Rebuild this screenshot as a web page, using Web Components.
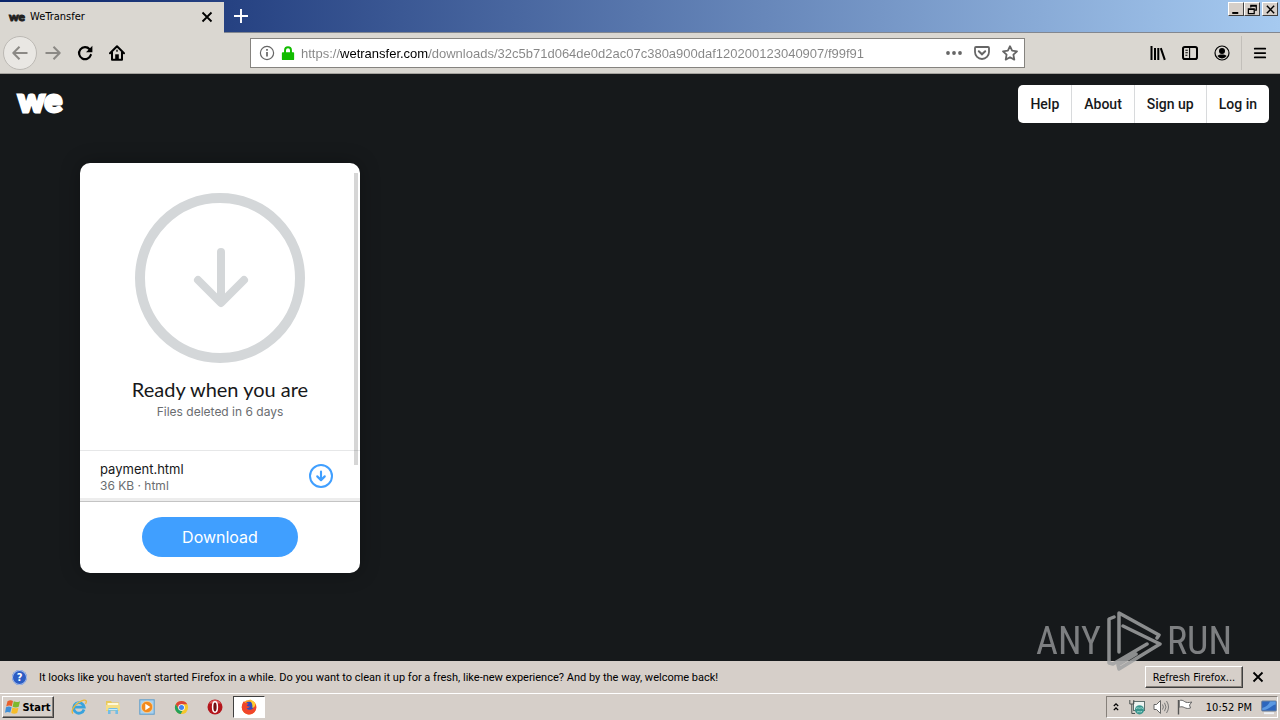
<!DOCTYPE html>
<html lang="en">
<head>
<meta charset="utf-8">
<title>WeTransfer</title>
<style>
    html, body {
        margin: 0;
        height: 100%;
    }

    body {
        display: flex;
        flex-direction: column;
        position: relative;
        overflow: hidden;
        background: #16191b;
        font-family: 'DejaVu Sans Condensed', 'DejaVu Sans', sans-serif;
        font-size: 11px;
        color: #000;
        --face: #d6cfc9;
    }

    transfer-page {
        flex: 1;
        min-height: 0;
    }
</style>
</head>
<body>
<title-bar>
    <browser-tab>WeTransfer</browser-tab>
</title-bar>
<nav-toolbar></nav-toolbar>
<transfer-page>
    <site-header slot="header">
        <a href="#help">Help</a>
        <a href="#about">About</a>
        <a href="#signup">Sign up</a>
        <a href="#login">Log in</a>
    </site-header>
    <download-card>
        <span slot="title">Ready when you are</span>
        <span slot="expiry">Files deleted in 6 days</span>
        <file-row slot="files">
            payment.html
            <span slot="meta">36 KB · html</span>
        </file-row>
    </download-card>
</transfer-page>
<notice-bar>It looks like you haven't started Firefox in a while. Do you want to clean it up for a fresh, like-new experience? And by the way, welcome back!</notice-bar>
<task-bar></task-bar>
<any-watermark></any-watermark>

<script>
const base = `
    :host, * { box-sizing: border-box; }
    button {
        margin: 0;
        padding: 0;
        border: 0;
        background: none;
        font: inherit;
        color: inherit;
        display: flex;
        align-items: center;
        justify-content: center;
    }
    svg { display: block; }
`;

function define(name, css, html) {
    const template = document.createElement('template');
    template.innerHTML = `<style>${base}${css}</style>${html}`;
    customElements.define(name, class extends HTMLElement {
        constructor() {
            super();
            this.attachShadow({ mode: 'open' });
            this.shadowRoot.appendChild(template.content.cloneNode(true));
        }
    });
}

// every icon is drawn on a 16 x 16 grid
const icons = {
    close: '<path d="M3.5 3.5l9 9M12.5 3.5l-9 9" stroke="currentColor" stroke-width="1.8" fill="none"/>',
    plus: '<path d="M8 0v16M0 8h16" stroke="currentColor" stroke-width="2.2" fill="none"/>',
    back: '<path d="M15.5 8H1.5M7.5 1.8L1.3 8l6.2 6.2" stroke="currentColor" stroke-width="2" fill="none" stroke-linejoin="round"/>',
    forward: '<path d="M.5 8h14M8.5 1.8L14.7 8l-6.2 6.2" stroke="currentColor" stroke-width="2" fill="none" stroke-linejoin="round"/>',
    reload: '<path d="M12.6 4.2A6 6 0 1 0 13.8 10" stroke="currentColor" stroke-width="2.2" fill="none" stroke-linecap="round"/><path d="M15.4.8v6.4H9z" fill="currentColor"/>',
    home: '<path d="M1 8.2L8 1.3l7 6.9M3 7v7.8h10V7" stroke="currentColor" stroke-width="2" fill="none" stroke-linejoin="round" stroke-linecap="round"/><path d="M6.2 14.5V9.3h3.6v5.2z" fill="currentColor"/><path d="M8 4.8v2" stroke="currentColor" stroke-width="1.4"/>',
    info: '<circle cx="8" cy="8" r="6.6" stroke="currentColor" stroke-width="1.2" fill="none"/><path d="M8 7v4.6M8 4v1.8" stroke="currentColor" stroke-width="1.7"/>',
    lock: '<path d="M4.6 8V4.8a3.4 3.4 0 0 1 6.8 0V8" stroke="currentColor" stroke-width="2.2" fill="none"/><rect x="1" y="7" width="14" height="9" rx="1" fill="currentColor"/>',
    dots: '<circle cx="2" cy="8" r="1.9" fill="currentColor"/><circle cx="8" cy="8" r="1.9" fill="currentColor"/><circle cx="14" cy="8" r="1.9" fill="currentColor"/>',
    pocket: '<path d="M2 2h12a1 1 0 0 1 1 1v4a7 7 0 0 1-14 0V3a1 1 0 0 1 1-1z" stroke="currentColor" stroke-width="1.8" fill="none"/><path d="M4.8 6.2L8 9.3l3.2-3.1" stroke="currentColor" stroke-width="2" fill="none" stroke-linecap="round"/>',
    star: '<path d="M8 1.2l2.1 4.5 4.9.6-3.6 3.4.9 4.9L8 12.2l-4.3 2.4.9-4.9L1 6.3l4.9-.6z" stroke="currentColor" stroke-width="1.8" fill="none" stroke-linejoin="round"/>',
    library: '<path d="M1.5 1v14M5 3v12M8.3 3v12M10.8 3.2l4 11.6" stroke="currentColor" stroke-width="2" fill="none"/>',
    sidebar: '<rect x="1" y="2" width="14" height="12" rx="1.8" stroke="currentColor" stroke-width="2" fill="none"/><path d="M7.6 2v12M3.4 5.2h2.4M3.4 7.7h2.4M3.4 10.2h2" stroke="currentColor" stroke-width="1.1"/>',
    account: '<circle cx="8" cy="8" r="7" stroke="currentColor" stroke-width="1.2" fill="none"/><circle cx="8" cy="6" r="3" fill="currentColor"/><path d="M3.4 11C4.7 9.6 6 9.4 8 9.4s3.3.2 4.6 1.6A5.600 5.600 0 0 1 8 13.500 5.600 5.600 0 0 1 3.400 11z" fill="currentColor"/>',
    menu: '<path d="M2 3h12M2 8h12M2 13h12" stroke="currentColor" stroke-width="2" fill="none" stroke-linecap="round"/>',
    minimize: '<path d="M3 12h8v2.6H3z" fill="currentColor"/>',
    restore: '<path d="M5.5 5V2h8v7H11M5 3h9" stroke="currentColor" stroke-width="1.8" fill="none"/><path d="M2 7h8.5v7H2zM2 7.8h8.5" stroke="currentColor" stroke-width="1.8" fill="none"/>',
    arrow: '<path d="M8 4.500v6.500M5 8.300L8 11.300l3-3" stroke="currentColor" stroke-width="1.700" fill="none" stroke-linecap="round" stroke-linejoin="round"/>',
    chevrons: '<path d="M4.500 6.500L8 3l3.500 3.500M4.500 13L8 9.500l3.500 3.500" stroke="currentColor" stroke-width="2" fill="none"/>',
    windows: '<path d="M2.500 2.200C4.600.8 6.400 1 8 1.900L6.800 7.300c-1.700-.9-3.400-1-5.600.2z" fill="#e8602c"/><path d="M8.800 2.300c1.900 1 3.900 1 6.200-.1l-1.300 5.600c-2.200 1.100-4.200.9-6.100-.1z" fill="#7db92e"/><path d="M1 8.300c2-1.200 3.900-1 5.600-.1l-1.300 5.400c-1.700-.9-3.400-1-5.300.1z" fill="#3f8fd8"/><path d="M7.400 8.600c2 1 4 1 6.100.1l-1.300 5.400c-2.100 1-4.100.9-6-.1z" fill="#f6bd2a"/>',
    explorer: '<path d="M13 10.500A5.300 5.300 0 1 1 13.200 8.200H3.500" stroke="#39a3dd" stroke-width="2.800" fill="none"/><path d="M4.300 5.300a4.800 4.800 0 0 1 5-2" stroke="#9adcf6" stroke-width="1" fill="none"/><path d="M2 14.500C-.5 12 3 6.500 8 3.300 11.500 1 15 .3 15.300 2.300c.1.800-.2 1.700-.8 2.600" stroke="#e9b63a" stroke-width="1.300" fill="none"/>',
    folder: '<path d="M1 2h5l1 1.500h7V12H1z" fill="#e9c95a"/><path d="M2.500 4h11v3h-11z" fill="#fff8d8"/><path d="M1 6h14v5.500H1z" fill="#f5de85"/><path d="M3 15v-4.500a1.500 1.500 0 0 1 1.500-1.500h7a1.500 1.500 0 0 1 1.500 1.500V15h-2.600v-3.200H5.600V15z" fill="#73bde5"/><path d="M3.500 10.500h9" stroke="#c7ecfb"/>',
    player: '<rect x=".8" y=".8" width="14.400" height="14.400" fill="#a9d1ee" stroke="#5f9dcb"/><circle cx="8" cy="8" r="5.700" fill="#f28a1d" stroke="#fbd39c" stroke-width=".8"/><path d="M6.300 4.700v6.600L11.300 8z" fill="#fff"/>',
    chrome: '<circle cx="8" cy="8" r="7" fill="#f5c72c"/><path d="M8 1a7 7 0 0 1 6.100 3.500H8L4.900 9.800 1.900 4.500A7 7 0 0 1 8 1z" fill="#dc4437"/><path d="M1.900 4.500l3 5.300L8 11.500l1.200-.2L7.200 15A7 7 0 0 1 1.900 4.500z" fill="#22a05b"/><circle cx="8" cy="8" r="3.500" fill="#fff"/><circle cx="8" cy="8" r="2.700" fill="#4284f0"/>',
    opera: '<circle cx="8" cy="8" r="7.500" fill="#b4151b"/><path d="M2 4.500a7 7 0 0 1 12 0z" fill="#df5658"/><ellipse cx="8" cy="8" rx="2.400" ry="5.200" fill="#741014" stroke="#fff" stroke-width="1.500"/>',
    firefox: '<circle cx="8" cy="8.300" r="7.200" fill="#ff9a1d"/><circle cx="8.300" cy="7.500" r="4.800" fill="#314bbd"/><path d="M1 6.500C1.500 4 2.500 2.600 3.300 2c0 1 .4 1.800 1 2.200 1-.2 2.500-.2 3.400.8-1.200.3-1.600 1-1.800 1.800 1 .6 2 .7 3 .5-.5 1.500-2 2-3.200 1.900 1.500 2.300 5.300 2.300 7-.700.9-2.300.4-4.800-1.400-6.600 3 1.600 4.700 4.700 3.800 8A7.200 7.200 0 0 1 1 6.500z" fill="#f0452b"/><path d="M8.500.3c2.500.6 5 2.200 6 4.600-.2 2.800-2.300 4.300-3.300 3.600C12.300 6 10 2.800 8.500.3z" fill="#ffcc2f"/>',
    network: '<rect x="4.500" y="2.500" width="11" height="9" fill="#edf4f2" stroke="#60716f"/><path d="M.8 1v4h2v9.500H6M4.800 1v4h-2" stroke="#4e5553" fill="none"/><circle cx="10.500" cy="10.800" r="4.600" fill="#39968e"/><path d="M7 9.500c2-1.500 3 .3 4.500-.5 1-.7 2 .5 3 1M8 13c1.500-1 3 .5 5-.5" stroke="#a5dad2" fill="none"/>',
    speaker: '<path d="M1 5.500h2.500L7.500 1.500v13l-4-4H1z" fill="#fff" stroke="#666"/><path d="M9.500 5.500q1.800 2.500 0 5M11.500 3.800q3 4.200 0 8.400M13.500 2q4 6 0 12" stroke="#777" fill="none"/>',
    flag: '<path d="M1.500 1v14.500" stroke="#555" stroke-width="1.400"/><path d="M2.300 1.600c2-1 4 0 5 .8 2 1.400 4 1.400 7.500.6l-2.300 3 1 3c-2.500.8-4 .5-6.200-.5-1.500-.8-3-1-5-.3z" fill="#fff" stroke="#666"/>',
    desktop: '<rect x=".7" y="2" width="14.600" height="10" rx=".8" fill="#2d66bd" stroke="#6f8199"/><path d="M1.300 9C5 8.500 8 5 9 2.600h5.700v3C11 6 7 11.500 1.300 11z" fill="#5b99e2"/><path d="M3 14.200h10" stroke="#eef2f7" stroke-width="1.800"/>'
};

class UiIcon extends HTMLElement {
    constructor() {
        super();
        this.attachShadow({ mode: 'open' });
    }

    connectedCallback() {
        const size = this.getAttribute('size') || 16;
        this.shadowRoot.innerHTML = `
            <style>
                :host { display: block; flex: none; }
                svg { display: block; }
            </style>
            <svg width="${size}" height="${size}" viewBox="0 0 16 16" aria-hidden="true">${icons[this.getAttribute('name')]}</svg>`;
    }
}
customElements.define('ui-icon', UiIcon);

define('we-logo', `
    :host {
        display: block;
        font-family: Lato, sans-serif;
        font-weight: 900;
        font-size: 33px;
        line-height: 24px;
        color: #fff;
        -webkit-text-stroke: 3px currentColor;
    }
    :host([small]) {
        font-size: 12px;
        line-height: 14px;
        color: #222;
        -webkit-text-stroke: 1px currentColor;
    }
`, `we`);

define('title-bar', `
    :host {
        display: flex;
        justify-content: space-between;
        align-items: flex-start;
        flex: none;
        height: 33px;
        background: linear-gradient(90deg, #0a246a, #a6caf0);
        border-bottom: 1px solid #828790;
    }
    .tabs {
        display: flex;
        align-self: stretch;
        padding-top: 2px;
        margin-bottom: -1px;
    }
    .new {
        width: 33px;
        padding-bottom: 3px;
        color: #fff;
    }
    .controls {
        display: flex;
        padding: 2px 2px 0 0;
    }
    .controls button {
        width: 16px;
        height: 14px;
        background: var(--face);
        border: 1px solid;
        border-color: #fff #404040 #404040 #fff;
    }
    .controls button:last-child { margin-left: 2px; }
`, `
    <div class="tabs">
        <slot></slot>
        <button class="new" aria-label="New tab"><ui-icon name="plus" size="14"></ui-icon></button>
    </div>
    <div class="controls">
        <button aria-label="Minimize"><ui-icon name="minimize" size="12"></ui-icon></button>
        <button aria-label="Restore"><ui-icon name="restore" size="11"></ui-icon></button>
        <button aria-label="Close"><ui-icon name="close" size="13"></ui-icon></button>
    </div>
`);

define('browser-tab', `
    :host {
        display: flex;
        align-items: center;
        gap: 5px;
        width: 224px;
        padding: 0 9px 2px;
        background: #dad7d1;
    }
    .label { flex: 1; }
`, `
    <we-logo small></we-logo>
    <span class="label"><slot></slot></span>
    <button aria-label="Close tab"><ui-icon name="close" size="16"></ui-icon></button>
`);

define('nav-toolbar', `
    :host {
        display: flex;
        align-items: center;
        justify-content: space-between;
        flex: none;
        height: 41px;
        padding: 0 3px;
        background: #dad7d1;
        border-bottom: 1px solid #a5a39e;
    }
    .group {
        display: flex;
        align-items: center;
        flex: 0 1 247px;
    }
    .group button { width: 32px; height: 34px; }
    .group button:disabled { color: #8b8985; }
    .group .back {
        width: 34px;
        border: 1px solid #bcb9b4;
        border-radius: 50%;
        background: #e9e7e3;
    }
    .url {
        display: flex;
        align-items: center;
        flex: 1 1 775px;
        height: 30px;
        padding: 0 6px 0 8px;
        gap: 6px;
        background: #fff;
        border: 1px solid #85837f;
        color: #666;
    }
    .lock { color: #12bc00; }
    .actions { display: flex; gap: 12px; }
    /* domain part is darker than the rest of the address */
    input {
        flex: 1;
        min-width: 0;
        padding: 0;
        border: 0;
        outline: 0;
        font: 13px 'Liberation Sans', sans-serif;
        color: #777;
        background: linear-gradient(90deg, #858585 39px, #000 39px, #000 128px, #858585 128px);
        -webkit-background-clip: text;
        background-clip: text;
        -webkit-text-fill-color: transparent;
    }
    .tools {
        flex-basis: 252px;
        justify-content: flex-end;
    }
    .tools .menu {
        width: 36px;
        border-left: 1px solid #c2bfba;
        margin-left: 3px;
    }
`, `
    <div class="group">
        <button class="back" disabled aria-label="Back"><ui-icon name="back"></ui-icon></button>
        <button disabled aria-label="Forward"><ui-icon name="forward"></ui-icon></button>
        <button aria-label="Reload"><ui-icon name="reload"></ui-icon></button>
        <button aria-label="Home"><ui-icon name="home"></ui-icon></button>
    </div>
    <div class="url">
        <ui-icon name="info"></ui-icon>
        <ui-icon class="lock" name="lock" size="14"></ui-icon>
        <input aria-label="Address" value="https://wetransfer.com/downloads/32c5b71d064de0d2ac07c380a900daf120200123040907/f99f91">
        <div class="actions">
            <button aria-label="Page actions"><ui-icon name="dots"></ui-icon></button>
            <button aria-label="Save to Pocket"><ui-icon name="pocket"></ui-icon></button>
            <button aria-label="Bookmark"><ui-icon name="star"></ui-icon></button>
        </div>
    </div>
    <div class="group tools">
        <button aria-label="Library"><ui-icon name="library"></ui-icon></button>
        <button aria-label="Sidebars"><ui-icon name="sidebar"></ui-icon></button>
        <button aria-label="Account"><ui-icon name="account"></ui-icon></button>
        <button class="menu" aria-label="Menu"><ui-icon name="menu" size="14"></ui-icon></button>
    </div>
`);

define('transfer-page', `
    :host {
        display: flex;
        flex-direction: column;
        background: #16191b;
    }
    main { padding: 40px 80px 0; }
`, `
    <slot name="header"></slot>
    <main><slot></slot></main>
`);

define('site-header', `
    :host {
        display: flex;
        align-items: flex-start;
        justify-content: space-between;
        padding: 11px 11px 0 18px;
    }
    we-logo { padding-top: 2px; }
    nav {
        display: flex;
        background: #fff;
        border-radius: 5px;
        font: 500 14px Roboto, sans-serif;
    }
    ::slotted(a) {
        padding: 0 12px;
        line-height: 38px;
        color: #17181a;
        text-decoration: none;
        border-left: 1px solid #d8dadc;
    }
    ::slotted(a:first-child) { border-left: 0; }
`, `
    <we-logo></we-logo>
    <nav><slot></slot></nav>
`);

define('download-card', `
    :host {
        display: block;
        position: relative;
        width: 280px;
        border-radius: 10px;
        background: #fff;
        box-shadow: 0 0 20px rgba(0, 0, 0, .3);
        font-family: Lato, sans-serif;
        text-align: center;
    }
    .body { padding-top: 30px; }
    .body svg { margin: 0 auto; }
    h2 {
        margin: 12px 0 0;
        font-weight: 400;
        font-size: 20px;
        line-height: 28px;
        color: #17181a;
    }
    p {
        margin: 0 0 29px;
        font: 12px/18px Inter, sans-serif;
        color: #6a6d70;
    }
    .thumb {
        position: absolute;
        top: 10px;
        right: 2px;
        width: 4px;
        height: 292px;
        background: rgba(0, 0, 0, .16);
    }
    footer {
        display: flex;
        justify-content: center;
        padding: 15px 0 16px;
        border-top: 1px solid #c4c4c4;
        box-shadow: 0 -3px 0 #ededed;
    }
    .download {
        width: 156px;
        height: 40px;
        border-radius: 20px;
        background: #409fff;
        color: #fff;
        font: 16px Inter, sans-serif;
    }
`, `
    <div class="body">
        <svg width="170" height="170" viewBox="0 0 170 170" fill="none" stroke="#d4d7d9" aria-hidden="true">
            <circle cx="85" cy="85" r="80" stroke-width="10"/>
            <path d="M86 59v50M63 87l23 23 23-23" stroke-width="8" stroke-linecap="round" stroke-linejoin="round"/>
        </svg>
        <h2><slot name="title"></slot></h2>
        <p><slot name="expiry"></slot></p>
        <slot name="files"></slot>
    </div>
    <div class="thumb"></div>
    <footer><button class="download">Download</button></footer>
`);

define('file-row', `
    :host {
        display: flex;
        align-items: center;
        justify-content: space-between;
        height: 51px;
        padding: 0 27px 0 20px;
        border-top: 1px solid #e6e7e8;
        text-align: left;
        font: 13px/18px Inter, sans-serif;
        color: #17181a;
    }
    .name { padding-top: 2px; }
    .meta {
        font-size: 12px;
        line-height: 16px;
        color: #6a6d70;
    }
    button {
        width: 24px;
        height: 24px;
        border: 2px solid #409fff;
        border-radius: 50%;
        color: #409fff;
    }
`, `
    <div>
        <div class="name"><slot></slot></div>
        <div class="meta"><slot name="meta"></slot></div>
    </div>
    <button aria-label="Download file"><ui-icon name="arrow" size="20"></ui-icon></button>
`);

define('notice-bar', `
    :host {
        display: flex;
        align-items: center;
        flex: none;
        height: 32px;
        padding: 0 14px 0 12px;
        gap: 7px;
        background: var(--face);
    }
    .help {
        width: 15px;
        height: 15px;
        margin-right: 5px;
        border-radius: 50%;
        background: #2c5dc4;
        box-shadow: inset 0 0 0 1px #a9bfea;
        color: #fff;
        font-weight: bold;
        line-height: 15px;
        text-align: center;
    }
    .text {
        flex: 1;
        font-family: Roboto, sans-serif;
    }
    .refresh {
        height: 22px;
        width: 98px;
        border: 1px solid;
        border-color: #fff #404040 #404040 #fff;
        box-shadow: inset -1px -1px 0 #86807a;
    }
    .refresh span { white-space: pre; }
`, `
    <span class="help">?</span>
    <span class="text"><slot></slot></span>
    <button class="refresh"><span>R<u>e</u>fresh Firefox...</span></button>
    <button aria-label="Dismiss"><ui-icon name="close" size="16"></ui-icon></button>
`);

define('task-bar', `
    :host {
        display: flex;
        align-items: center;
        flex: none;
        height: 27px;
        padding: 0 2px;
        background: var(--face);
        border-top: 1px solid #fff;
    }
    .start {
        width: 52px;
        height: 22px;
        gap: 1px;
        font-weight: bold;
        border: 1px solid;
        border-color: #fff #404040 #404040 #fff;
        box-shadow: inset -1px -1px 0 #86807a;
    }
    .apps {
        display: flex;
        flex: 1;
        padding-left: 9px;
        gap: 2px;
    }
    .apps button {
        width: 32px;
        height: 22px;
    }
    .apps .active {
        background: #fff;
        border: 1px solid;
        border-color: #404040 #fff #fff #404040;
    }
    .tray {
        display: flex;
        align-items: center;
        height: 22px;
        gap: 8px;
        padding: 0 0 0 4px;
        border: 1px solid;
        border-color: #86807a #fff #fff #86807a;
    }
    time { padding: 0 1px 0 5px; }
`, `
    <button class="start"><ui-icon name="windows"></ui-icon>Start</button>
    <div class="apps">
        <button aria-label="Internet Explorer"><ui-icon name="explorer"></ui-icon></button>
        <button aria-label="File Explorer"><ui-icon name="folder"></ui-icon></button>
        <button aria-label="Media Player"><ui-icon name="player"></ui-icon></button>
        <button aria-label="Chrome"><ui-icon name="chrome" size="15"></ui-icon></button>
        <button aria-label="Opera"><ui-icon name="opera"></ui-icon></button>
        <button class="active" aria-label="Firefox"><ui-icon name="firefox"></ui-icon></button>
    </div>
    <div class="tray">
        <ui-icon name="chevrons" size="10"></ui-icon>
        <ui-icon name="network"></ui-icon>
        <ui-icon name="speaker"></ui-icon>
        <ui-icon name="flag"></ui-icon>
        <time>10:52 PM</time>
        <ui-icon name="desktop"></ui-icon>
    </div>
`);

define('any-watermark', `
    :host {
        display: flex;
        align-items: center;
        gap: 4px;
        position: absolute;
        right: 48px;
        bottom: 48px;
        font: 38px/62px 'Liberation Sans Narrow', 'Roboto Condensed', sans-serif;
        color: #8f9193;
        opacity: .85;
        pointer-events: none;
    }
`, `
    <span>ANY</span>
    <svg width="58" height="62" viewBox="0 0 58 62" fill="none" stroke="#a0a2a3" stroke-width="3.500" stroke-linejoin="round" stroke-linecap="round" aria-hidden="true">
        <path d="M9 7L4 9v44l4 1 34-20M14 42V3l40 22-2 3M18 16l37 18-41 25-1-4 18-11"/>
    </svg>
    <span>RUN</span>
`);
</script>
</body>
</html>
